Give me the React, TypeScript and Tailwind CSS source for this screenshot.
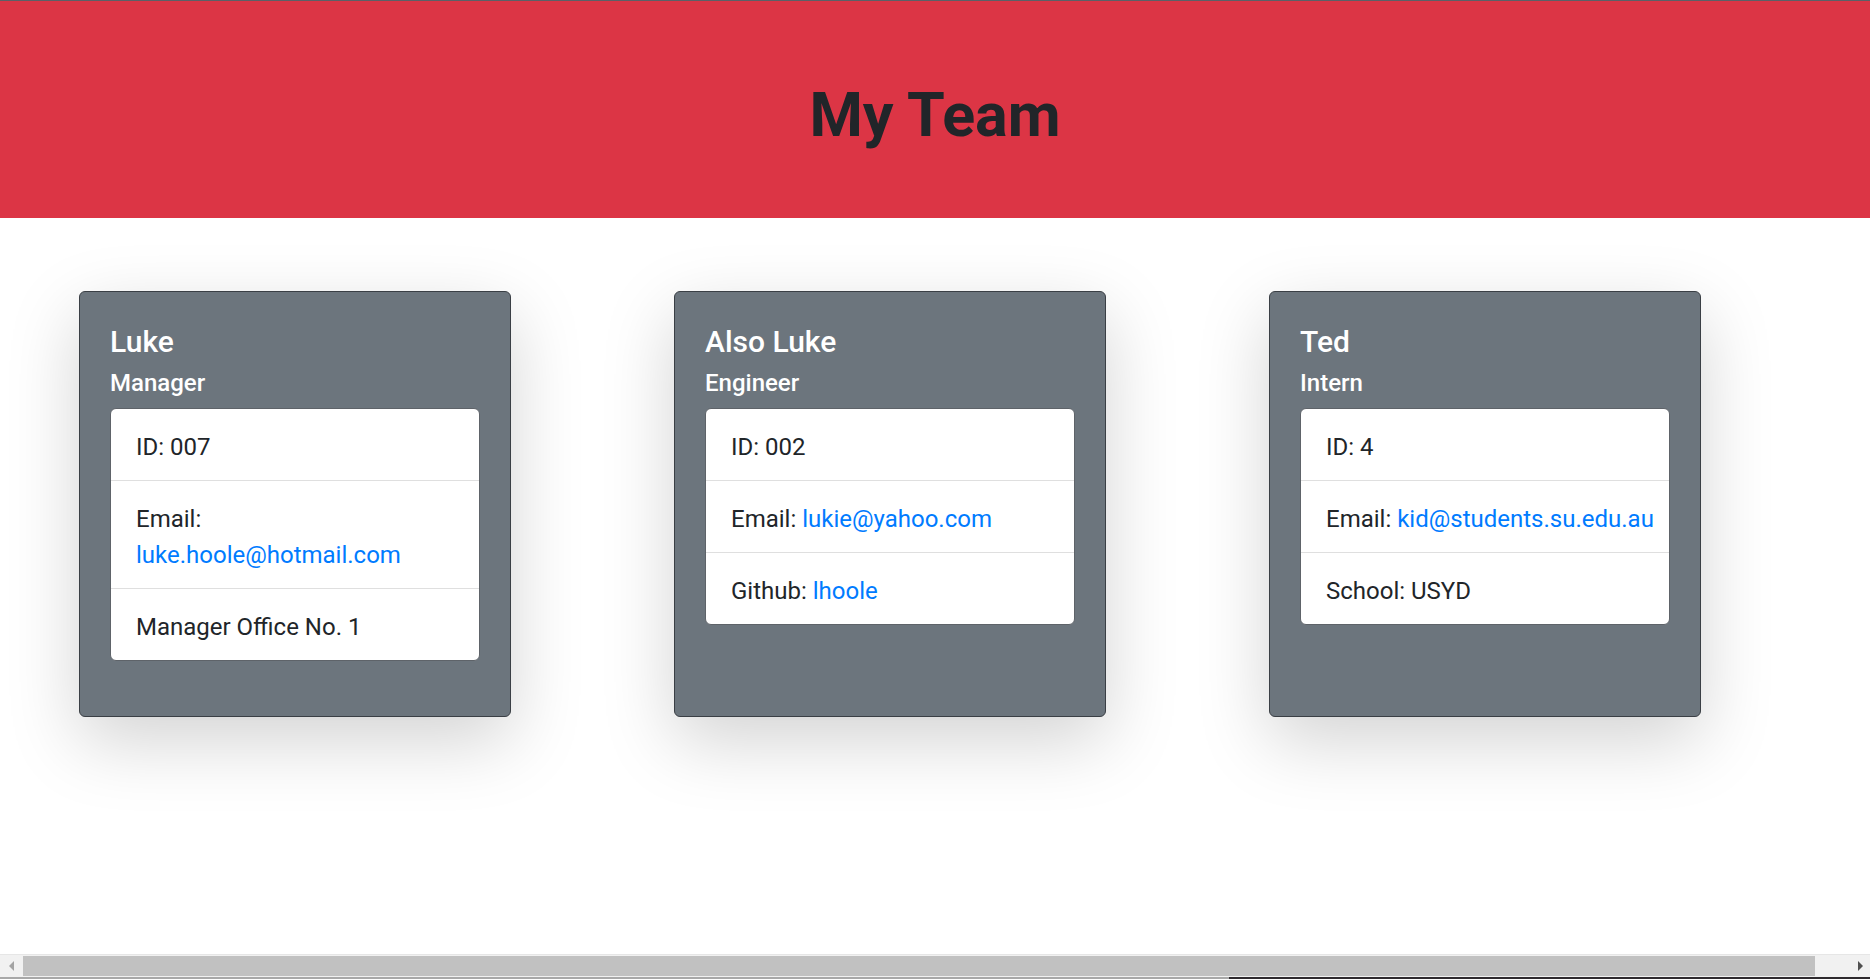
import React from 'react';

interface Member {
  name: string;
  role: string;
  id: string;
  email: string;
  extraLabel: string;
  extraValue: string;
  extraLink?: boolean;
}

const team: Member[] = [
  { name: 'Luke', role: 'Manager', id: '007', email: 'luke.hoole@hotmail.com', extraLabel: 'Manager Office No.', extraValue: '1' },
  { name: 'Also Luke', role: 'Engineer', id: '002', email: 'lukie@yahoo.com', extraLabel: 'Github:', extraValue: 'lhoole', extraLink: true },
  { name: 'Ted', role: 'Intern', id: '4', email: 'kid@students.su.edu.au', extraLabel: 'School:', extraValue: 'USYD' },
];

function MemberCard({ member }: { member: Member }) {
  return (
    <div className="w-[432px] h-[426px] shrink-0 bg-[#6c757d] border border-[#3a3f45] rounded-[6px] shadow-[0_24px_72px_rgba(0,0,0,0.175)] px-[30px] pt-[32px]">
      <h5 className="text-[30px] leading-[36px] font-medium text-white">{member.name}</h5>
      <h6 className="mt-[9px] text-[24px] leading-[29px] font-medium text-white">{member.role}</h6>

      {/* Details list */}
      <ul className="mt-[10px] bg-white rounded-[6px] border border-[#5e6369] text-[24px] leading-[36px] text-[#212529]">
        <li className="pl-[25px] pr-[8px] pt-[20px] pb-[15px]">ID: {member.id}</li>
        <li className="pl-[25px] pr-[8px] pt-[20px] pb-[15px] border-t border-[#dfdfdf]">
          Email: <a href={`mailto:${member.email}`} className="text-[#007bff]">{member.email}</a>
        </li>
        <li className="pl-[25px] pr-[8px] pt-[20px] pb-[15px] border-t border-[#dfdfdf]">
          {member.extraLabel}{' '}
          {member.extraLink ? (
            <a href="#" className="text-[#007bff]">{member.extraValue}</a>
          ) : (
            member.extraValue
          )}
        </li>
      </ul>
    </div>
  );
}

export default function App() {
  return (
    <div className="h-screen flex flex-col overflow-hidden bg-white font-[family-name:Roboto,sans-serif]">
      {/* Header */}
      <header className="h-[218px] shrink-0 bg-[#dc3545] border-t border-[#5b6067] flex justify-center pt-[78px]">
        <h1 className="text-[61px] leading-[72px] font-bold text-[#212529]">My Team</h1>
      </header>

      {/* Cards */}
      <main className="flex-1 flex items-start gap-[163px] pl-[79px] pt-[73px]">
        {team.map((m) => (
          <MemberCard key={m.name} member={m} />
        ))}
      </main>

      {/* Horizontal scrollbar */}
      <div className="h-[23px] shrink-0 bg-[#f1f1f1] border-t border-[#e6e6e6] flex items-center">
        <div className="w-[23px] flex justify-center">
          <svg width="6" height="10" viewBox="0 0 6 10">
            <path d="M5 0 L0 5 L5 10 Z" fill="#a3a3a3" />
          </svg>
        </div>
        <div className="w-[1792px] h-[20px] bg-[#c1c1c1]" />
        <div className="flex-1 flex justify-end pr-[6px]">
          <svg width="6" height="10" viewBox="0 0 6 10">
            <path d="M0 0 L5 5 L0 10 Z" fill="#505050" />
          </svg>
        </div>
      </div>
      <div className="h-[2px] shrink-0 flex">
        <div className="w-[1229px] bg-[#a8a8a8]" />
        <div className="flex-1 bg-[#2e2a2e]" />
      </div>
    </div>
  );
}
